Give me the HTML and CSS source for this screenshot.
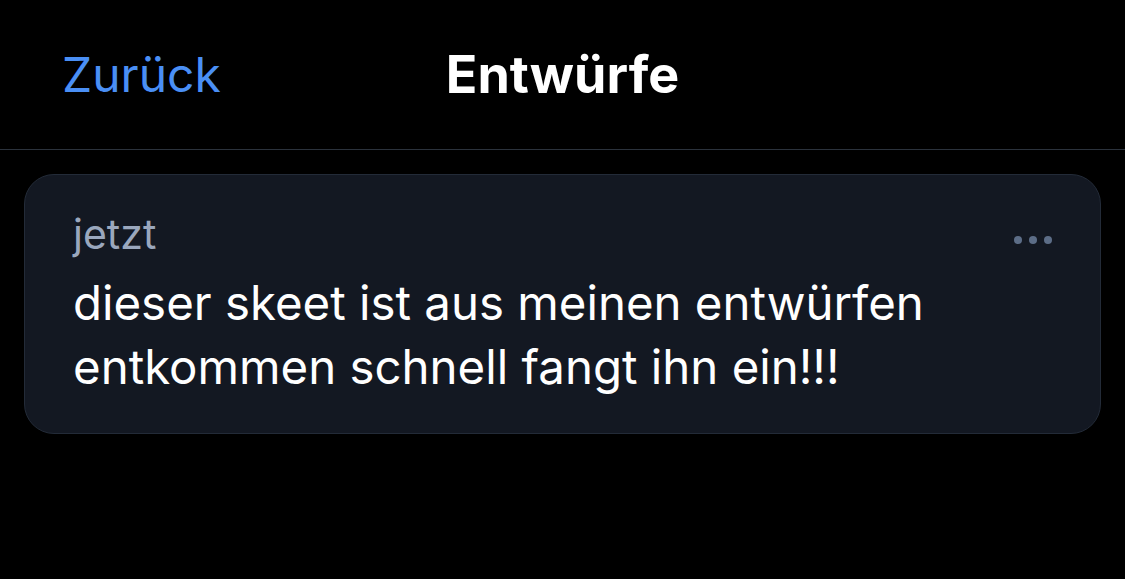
FILE: index.html
```html
<!DOCTYPE html>
<html lang="de">
<head>
<meta charset="utf-8">
<link rel="stylesheet" href="styles.css">
</head>
<body>
<header class="topbar">
  <a class="back">Zurück</a>
  <h1 class="title">Entwürfe</h1>
  <span class="spacer"></span>
</header>
<main class="list">
  <article class="draft">
    <div class="draft-head">
      <span class="time">jetzt</span>
      <span class="more"><i></i><i></i><i></i></span>
    </div>
    <p class="draft-text">dieser skeet ist aus meinen entwürfen entkommen schnell fangt ihn ein!!!</p>
  </article>
</main>
</body>
</html>
```
FILE: styles.css
```css
html, body {
  margin: 0;
  padding: 0;
  background: #000;
  font-family: Inter, "Noto Sans", sans-serif;
  color: #fff;
}
.topbar {
  height: 150px;
  display: grid;
  grid-template-columns: 1fr auto 1fr;
  align-items: center;
  padding: 0 62px;
  border-bottom: 1px solid #2b323c;
  box-sizing: border-box;
}
.back {
  color: #4a8ff5;
  font-size: 48px;
  justify-self: start;
}
.title {
  margin: 0;
  font-size: 52px;
  font-weight: 700;
}
.list {
  padding: 24px 24px;
}
.draft {
  background: #131822;
  border: 1px solid #232b38;
  border-radius: 30px;
  padding: 34px 48px 34px 48px;
}
.draft-head {
  display: flex;
  justify-content: space-between;
  align-items: center;
}
.time {
  color: #9aa7bd;
  font-size: 41px;
  line-height: 50px;
}
.more {
  display: flex;
  gap: 7px;
  margin-top: 12px;
}
.more i {
  width: 8px;
  height: 8px;
  border-radius: 50%;
  background: #5c6d87;
}
.draft-text {
  margin: 12px 0 0;
  font-size: 47.4px;
  line-height: 64px;
}
```
